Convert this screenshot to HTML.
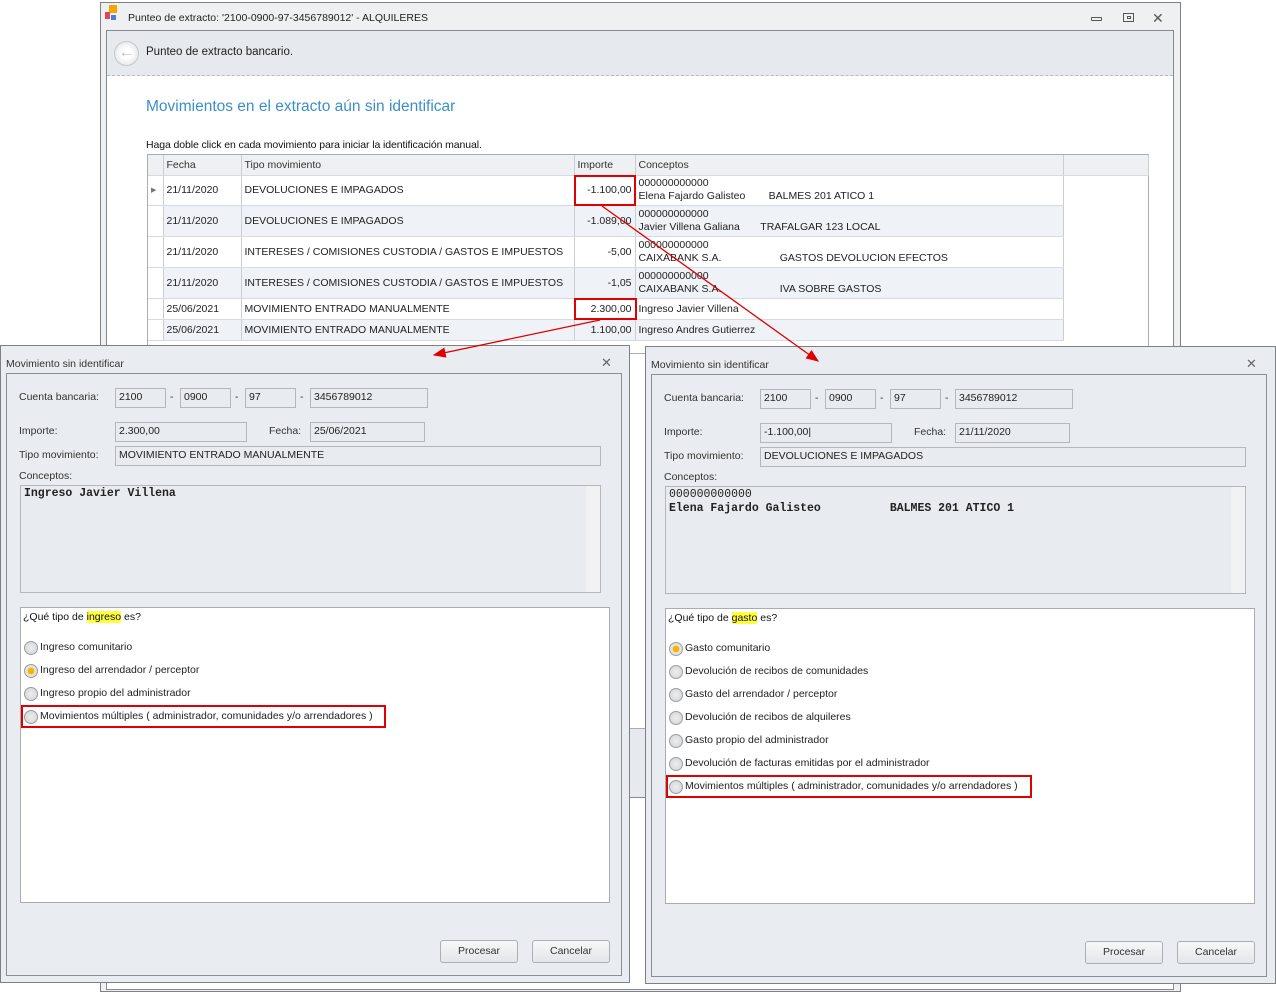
<!DOCTYPE html>
<html><head><meta charset="utf-8"><style>
*{margin:0;padding:0;box-sizing:border-box}
body{width:1276px;height:983px;background:#fff;position:relative;overflow:hidden;font-family:"Liberation Sans",sans-serif;font-size:10.5px;color:#222}
.a{position:absolute}
.inp{position:absolute;background:#e8ebef;border:1px solid #b4b8bd;height:20px;padding:2px 3px;font-size:10.5px;white-space:nowrap}
.lbl{position:absolute;font-size:10.5px;color:#333;white-space:nowrap}
.dlg{position:absolute;width:630px;height:638px;background:#e9ecf0;border:1px solid #7d8186}
.body{position:absolute;left:6px;top:27px;width:616px;height:603px;border:1px solid #8c9096;background:#e9ecf0}
.panel{position:absolute;left:13px;top:234px;width:590px;height:296px;background:#fff;border:1px solid #a9adb2}
.r{position:absolute;left:3px;height:18px;line-height:18px;white-space:nowrap;padding-left:16px;font-size:10.5px}
.r:before{content:"";position:absolute;left:0;top:3px;width:12px;height:12px;border-radius:50%;border:1px solid #9a9ea3;background:radial-gradient(circle,#eee 0,#d0d2d5 100%)}
.r.on:before{background:radial-gradient(circle,#f7b500 0,#f7b500 35%,#e8e8e8 45%,#d0d2d5 100%)}
.btn{position:absolute;width:78px;height:23px;border:1px solid #acb0b5;border-radius:3px;background:linear-gradient(#f6f7f8,#e3e6ea);text-align:center;line-height:21px;font-size:10.5px;color:#333}
.ta{position:absolute;background:#e8ebef;border:1px solid #b4b8bd;font-family:"Liberation Mono",monospace;font-size:11.5px;font-weight:bold;padding:1px 3px;line-height:14px;white-space:pre;height:108px}
.sb{position:absolute;right:0;top:0;width:14px;height:100%;background:#f0f2f4}
.hl{background:#ffff40}
.red{position:absolute;border:2px solid #e00000}
td{border-right:1px solid #c9ced4;border-bottom:1px solid #d5dae0;padding:0 3px;font-size:10.5px;vertical-align:middle;white-space:nowrap;overflow:hidden}
</style></head><body>
<div class="a" style="left:100px;top:2px;width:1081px;height:990px;background:#eef0f2;border:1px solid #7d8186"></div>
<div class="a" style="left:109px;top:5px;width:8px;height:8px;background:#f7a400"></div>
<div class="a" style="left:105px;top:12px;width:5px;height:7px;background:#e04656"></div>
<div class="a" style="left:111px;top:15px;width:5px;height:5px;background:#4a7fd0"></div>
<div class="lbl" style="left:128px;top:12px;color:#222">Punteo de extracto: '2100-0900-97-3456789012' - ALQUILERES</div>
<div class="a" style="left:1091px;top:17px;width:11px;height:4px;border:1px solid #555;border-radius:1px"></div>
<div class="a" style="left:1123px;top:13px;width:11px;height:9px;border:1px solid #555"></div>
<div class="a" style="left:1127px;top:16px;width:4px;height:3px;border:1px solid #555"></div>
<div class="lbl" style="left:1152px;top:10px;font-size:14px;color:#555">✕</div>
<div class="a" style="left:106px;top:30px;width:1068px;height:960px;background:#fff;border:1px solid #868a90"></div>
<div class="a" style="left:107px;top:31px;width:1066px;height:45px;background:#e6e9ed;border-bottom:1px dashed #b9bdc2"></div>
<div class="a" style="left:114px;top:41px;width:25px;height:25px;border-radius:50%;background:radial-gradient(circle,#fff 30%,#d9dce0);border:1px solid #c4c7cb;color:#bbb;font-size:16px;line-height:22px;text-align:center">&#x2190;</div>
<div class="lbl" style="left:146px;top:46px;font-size:11.5px;color:#222">Punteo de extracto bancario.</div>
<div class="lbl" style="left:146px;top:98px;font-size:15.5px;color:#3b8fc7">Movimientos en el extracto aún sin identificar</div>
<div class="lbl" style="left:146px;top:139px;color:#111;letter-spacing:-0.1px">Haga doble click en cada movimiento para iniciar la identificación manual.</div>
<div class="a" style="left:147px;top:154px;width:1002px;height:200px;border:1px solid #a9adb2;background:#fff"></div>
<table class="a" style="left:148px;top:155px;border-collapse:collapse;width:1000px;table-layout:fixed">
<colgroup><col style="width:15px"><col style="width:78px"><col style="width:333px"><col style="width:61px"><col style="width:428px"><col style="width:85px"></colgroup>
<tr style="height:20px;background:#eef0f3;color:#333"><td></td><td>Fecha</td><td>Tipo movimiento</td><td>Importe</td><td>Conceptos</td><td></td></tr>
<tr style="height:30px"><td style="font-size:7px;color:#777">&#9654;</td><td>21/11/2020</td><td>DEVOLUCIONES E IMPAGADOS</td><td style="text-align:right">-1.100,00</td><td style="line-height:13px">000000000000<br>Elena Fajardo Galisteo&nbsp;&nbsp;&nbsp;&nbsp;&nbsp;&nbsp;&nbsp;&nbsp;BALMES 201 ATICO 1</td><td style="border:none;background:#fff"></td></tr>
<tr style="height:31px;background:#eff2f7"><td style="background:#fff"></td><td>21/11/2020</td><td>DEVOLUCIONES E IMPAGADOS</td><td style="text-align:right">-1.089,00</td><td style="line-height:13px">000000000000<br>Javier Villena Galiana&nbsp;&nbsp;&nbsp;&nbsp;&nbsp;&nbsp;&nbsp;TRAFALGAR 123 LOCAL</td><td style="border:none;background:#fff"></td></tr>
<tr style="height:31px"><td></td><td>21/11/2020</td><td>INTERESES / COMISIONES CUSTODIA / GASTOS E IMPUESTOS</td><td style="text-align:right">-5,00</td><td style="line-height:13px">000000000000<br>CAIXABANK S.A.&nbsp;&nbsp;&nbsp;&nbsp;&nbsp;&nbsp;&nbsp;&nbsp;&nbsp;&nbsp;&nbsp;&nbsp;&nbsp;&nbsp;&nbsp;&nbsp;&nbsp;&nbsp;&nbsp;&nbsp;GASTOS DEVOLUCION EFECTOS</td><td style="border:none"></td></tr>
<tr style="height:31px;background:#eff2f7"><td style="background:#fff"></td><td>21/11/2020</td><td>INTERESES / COMISIONES CUSTODIA / GASTOS E IMPUESTOS</td><td style="text-align:right">-1,05</td><td style="line-height:13px">000000000000<br>CAIXABANK S.A.&nbsp;&nbsp;&nbsp;&nbsp;&nbsp;&nbsp;&nbsp;&nbsp;&nbsp;&nbsp;&nbsp;&nbsp;&nbsp;&nbsp;&nbsp;&nbsp;&nbsp;&nbsp;&nbsp;&nbsp;IVA SOBRE GASTOS</td><td style="border:none;background:#fff"></td></tr>
<tr style="height:21px"><td></td><td>25/06/2021</td><td>MOVIMIENTO ENTRADO MANUALMENTE</td><td style="text-align:right">2.300,00</td><td>Ingreso Javier Villena</td><td style="border:none"></td></tr>
<tr style="height:21px;background:#eff2f7"><td style="background:#fff"></td><td>25/06/2021</td><td>MOVIMIENTO ENTRADO MANUALMENTE</td><td style="text-align:right">1.100,00</td><td>Ingreso Andres Gutierrez</td><td style="border:none;background:#fff"></td></tr>
</table>
<div class="red" style="left:574px;top:175px;width:62px;height:31px"></div>
<div class="red" style="left:574px;top:298px;width:63px;height:22px"></div>
<div class="a" style="left:629px;top:728px;width:17px;height:70px;background:#e6e9ed;border-top:1px solid #a9adb2;border-bottom:1px solid #868a90"></div>

<div class="dlg" style="left:0;top:345px">
<div class="lbl" style="left:5px;top:12px">Movimiento sin identificar</div>
<div class="lbl" style="left:600px;top:9px;font-size:13px;color:#666">✕</div>
<div class="body" style="left:5px"></div>
<div class="lbl" style="left:18px;top:45px">Cuenta bancaria:</div>
<div class="inp" style="left:114px;top:42px;width:51px">2100</div>
<div class="lbl" style="left:169px;top:45px">-</div>
<div class="inp" style="left:179px;top:42px;width:51px">0900</div>
<div class="lbl" style="left:234px;top:45px">-</div>
<div class="inp" style="left:244px;top:42px;width:51px">97</div>
<div class="lbl" style="left:299px;top:45px">-</div>
<div class="inp" style="left:309px;top:42px;width:118px">3456789012</div>
<div class="lbl" style="left:18px;top:79px">Importe:</div>
<div class="inp" style="left:114px;top:76px;width:132px">2.300,00</div>
<div class="lbl" style="left:268px;top:79px">Fecha:</div>
<div class="inp" style="left:309px;top:76px;width:115px">25/06/2021</div>
<div class="lbl" style="left:18px;top:103px">Tipo movimiento:</div>
<div class="inp" style="left:114px;top:100px;width:486px">MOVIMIENTO ENTRADO MANUALMENTE</div>
<div class="lbl" style="left:18px;top:124px">Conceptos:</div>
<div class="ta" style="left:19px;top:139px;width:581px">Ingreso Javier Villena<div class="sb"></div></div>
<div class="panel" style="left:19px;top:261px">
<div class="lbl" style="left:2px;top:3px;color:#111">¿Qué tipo de <span class="hl">ingreso</span> es?</div>
<div class="r" style="top:30px">Ingreso comunitario</div>
<div class="r on" style="top:53px">Ingreso del arrendador / perceptor</div>
<div class="r" style="top:76px">Ingreso propio del administrador</div>
<div class="r" style="top:99px">Movimientos múltiples ( administrador, comunidades y/o arrendadores )</div>
<div class="red" style="left:0;top:97px;width:365px;height:23px"></div>
</div>
<div class="btn" style="left:439px;top:594px">Procesar</div>
<div class="btn" style="left:531px;top:594px">Cancelar</div>
</div>

<div class="dlg" style="left:645px;top:346px;width:631px">
<div class="lbl" style="left:5px;top:12px">Movimiento sin identificar</div>
<div class="lbl" style="left:600px;top:9px;font-size:13px;color:#666">✕</div>
<div class="body" style="left:5px"></div>
<div class="lbl" style="left:18px;top:45px">Cuenta bancaria:</div>
<div class="inp" style="left:114px;top:42px;width:51px">2100</div>
<div class="lbl" style="left:169px;top:45px">-</div>
<div class="inp" style="left:179px;top:42px;width:51px">0900</div>
<div class="lbl" style="left:234px;top:45px">-</div>
<div class="inp" style="left:244px;top:42px;width:51px">97</div>
<div class="lbl" style="left:299px;top:45px">-</div>
<div class="inp" style="left:309px;top:42px;width:118px">3456789012</div>
<div class="lbl" style="left:18px;top:79px">Importe:</div>
<div class="inp" style="left:114px;top:76px;width:132px">-1.100,00|</div>
<div class="lbl" style="left:268px;top:79px">Fecha:</div>
<div class="inp" style="left:309px;top:76px;width:115px">21/11/2020</div>
<div class="lbl" style="left:18px;top:103px">Tipo movimiento:</div>
<div class="inp" style="left:114px;top:100px;width:486px">DEVOLUCIONES E IMPAGADOS</div>
<div class="lbl" style="left:18px;top:124px">Conceptos:</div>
<div class="ta" style="left:19px;top:139px;width:581px;font-weight:normal">000000000000
<b>Elena Fajardo Galisteo          BALMES 201 ATICO 1</b><div class="sb"></div></div>
<div class="panel" style="left:19px;top:261px">
<div class="lbl" style="left:2px;top:3px;color:#111">¿Qué tipo de <span class="hl">gasto</span> es?</div>
<div class="r on" style="top:30px">Gasto comunitario</div>
<div class="r" style="top:53px">Devolución de recibos de comunidades</div>
<div class="r" style="top:76px">Gasto del arrendador / perceptor</div>
<div class="r" style="top:99px">Devolución de recibos de alquileres</div>
<div class="r" style="top:122px">Gasto propio del administrador</div>
<div class="r" style="top:145px">Devolución de facturas emitidas por el administrador</div>
<div class="r" style="top:168px">Movimientos múltiples ( administrador, comunidades y/o arrendadores )</div>
<div class="red" style="left:0;top:166px;width:366px;height:23px"></div>
</div>
<div class="btn" style="left:439px;top:594px">Procesar</div>
<div class="btn" style="left:531px;top:594px">Cancelar</div>
</div>

<svg class="a" style="left:0;top:0" width="1276" height="983">
<defs><marker id="m" markerWidth="10" markerHeight="8" refX="9" refY="4" orient="auto"><path d="M0,0 L10,4 L0,8 z" fill="#e00000"/></marker></defs>
<line x1="600" y1="320" x2="434" y2="355" stroke="#e00000" stroke-width="1.3" marker-end="url(#m)"/>
<line x1="602" y1="206" x2="818" y2="361" stroke="#e00000" stroke-width="1.3" marker-end="url(#m)"/>
</svg>
</body></html>
